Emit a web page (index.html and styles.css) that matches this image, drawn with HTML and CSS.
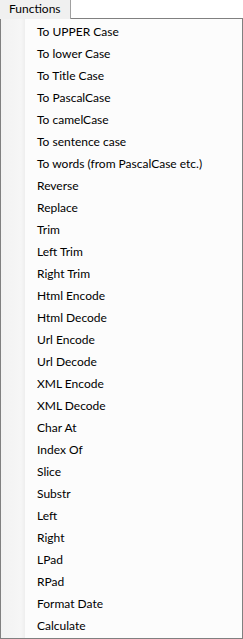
FILE: index.html
```html
<!DOCTYPE html>
<html>
<head>
<meta charset="utf-8">
<link rel="stylesheet" href="styles.css">
</head>
<body>
<div class="bar">
  <div class="tab">Functions</div>
  <div class="bar-rest"></div>
</div>
<div class="menu">
  <div class="item">To UPPER Case</div>
  <div class="item">To lower Case</div>
  <div class="item">To Title Case</div>
  <div class="item">To PascalCase</div>
  <div class="item">To camelCase</div>
  <div class="item">To sentence case</div>
  <div class="item">To words (from PascalCase etc.)</div>
  <div class="item">Reverse</div>
  <div class="item">Replace</div>
  <div class="item">Trim</div>
  <div class="item">Left Trim</div>
  <div class="item">Right Trim</div>
  <div class="item">Html Encode</div>
  <div class="item">Html Decode</div>
  <div class="item">Url Encode</div>
  <div class="item">Url Decode</div>
  <div class="item">XML Encode</div>
  <div class="item">XML Decode</div>
  <div class="item">Char At</div>
  <div class="item">Index Of</div>
  <div class="item">Slice</div>
  <div class="item">Substr</div>
  <div class="item">Left</div>
  <div class="item">Right</div>
  <div class="item">LPad</div>
  <div class="item">RPad</div>
  <div class="item">Format Date</div>
  <div class="item">Calculate</div>
</div>
</body>
</html>
```
FILE: styles.css
```css
html, body {
  margin: 0;
  padding: 0;
  background: #ffffff;
}
body {
  width: 243px;
  font-family: Lato, "Noto Sans", sans-serif;
  font-size: 12px;
  color: #000000;
}
.bar {
  display: flex;
  height: 19px;
}
.tab {
  width: 61px;
  padding-left: 9px;
  height: 19px;
  line-height: 18px;
  background: #f0f0f0;
  border-left: 1px solid #a0a0a0;
  border-right: 1px solid #a0a0a0;
  box-sizing: content-box;
  margin-left: -1px;
}
.bar-rest {
  flex: 1;
  border-bottom: 1px solid #808080;
  box-sizing: border-box;
}
.menu {
  width: 243px;
  height: 620px;
  box-sizing: border-box;
  border: 1px solid #808080;
  border-top: none;
  padding: 2px 0 2px 0;
  background:
    linear-gradient(to right, #f2f2f2 0, #f6f6f6 20px, #eeeeee 24px, #fcfcfc 24px) no-repeat;
  background-color: #fcfcfc;
}
.item {
  height: 22px;
  line-height: 22px;
  padding-left: 36px;
  white-space: nowrap;
}
```
